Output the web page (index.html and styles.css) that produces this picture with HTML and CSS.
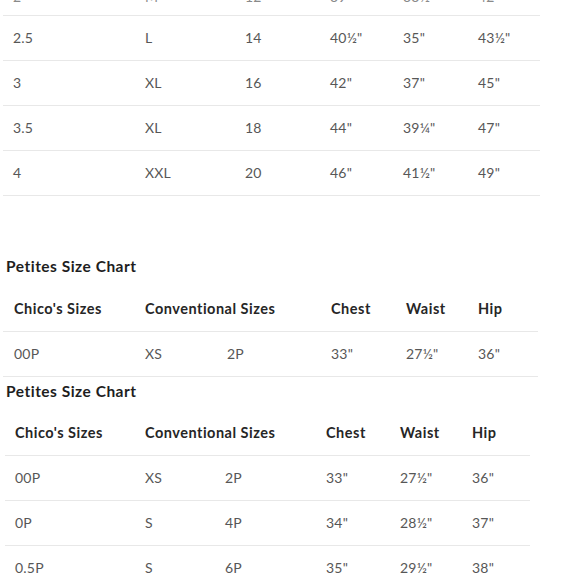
FILE: index.html
```html
<!DOCTYPE html>
<html>
<head>
<meta charset="utf-8">
<link rel="stylesheet" href="styles.css">
</head>
<body>
<div class="page">
  <div class="table t1">
    <div class="row partial"><span>2</span><span>M</span><span>12</span><span>39"</span><span>33½"</span><span>42"</span></div>
    <div class="row"><span>2.5</span><span>L</span><span>14</span><span>40½"</span><span>35"</span><span>43½"</span></div>
    <div class="row"><span>3</span><span>XL</span><span>16</span><span>42"</span><span>37"</span><span>45"</span></div>
    <div class="row"><span>3.5</span><span>XL</span><span>18</span><span>44"</span><span>39¼"</span><span>47"</span></div>
    <div class="row"><span>4</span><span>XXL</span><span>20</span><span>46"</span><span>41½"</span><span>49"</span></div>
  </div>

  <h2 class="title first">Petites Size Chart</h2>
  <div class="table t2">
    <div class="row head"><span>Chico's Sizes</span><span class="span2">Conventional Sizes</span><span>Chest</span><span>Waist</span><span>Hip</span></div>
    <div class="row"><span>00P</span><span>XS</span><span>2P</span><span>33"</span><span>27½"</span><span>36"</span></div>
  </div>

  <h2 class="title second">Petites Size Chart</h2>
  <div class="table t3">
    <div class="row head"><span>Chico's Sizes</span><span class="span2">Conventional Sizes</span><span>Chest</span><span>Waist</span><span>Hip</span></div>
    <div class="row"><span>00P</span><span>XS</span><span>2P</span><span>33"</span><span>27½"</span><span>36"</span></div>
    <div class="row"><span>0P</span><span>S</span><span>4P</span><span>34"</span><span>28½"</span><span>37"</span></div>
    <div class="row"><span>0.5P</span><span>S</span><span>6P</span><span>35"</span><span>29½"</span><span>38"</span></div>
  </div>
</div>
</body>
</html>
```

FILE: styles.css
```css
html, body {
  margin: 0;
  padding: 0;
  background: #ffffff;
}

body {
  width: 580px;
  height: 580px;
  overflow: hidden;
  font-family: Lato, "Open Sans", "Liberation Sans", sans-serif;
  font-size: 14px;
  color: #575757;
}

.page {
  display: flex;
  flex-direction: column;
}

.table {
  display: flex;
  flex-direction: column;
}

.row {
  display: grid;
  height: 44px;
  align-items: center;
  border-bottom: 1px solid #e8e8e8;
  line-height: 20px;
  white-space: nowrap;
  letter-spacing: 0.2px;
}

.row.partial {
  align-items: end;
  height: 45px;
  padding-bottom: 8px;
  box-sizing: border-box;
  color: #8a8a8a;
}

.t1 {
  margin-top: -29px;
  margin-left: 3px;
  width: 537px;
}

.t1 .row {
  grid-template-columns: 132px 100px 85px 73px 75px 1fr;
  padding-left: 10px;
}

.t2 {
  margin-left: 3px;
  width: 535px;
}

.t2 .row {
  grid-template-columns: 131px 82px 104px 75px 72px 1fr;
  padding-left: 11px;
}

.t3 {
  margin-left: 5px;
  width: 525px;
}

.t3 .row {
  grid-template-columns: 130px 80px 101px 74px 72px 1fr;
  padding-left: 10px;
}

.row.head {
  font-weight: 700;
  font-size: 14.5px;
  letter-spacing: 0.5px;
  color: #262626;
}

.span2 {
  grid-column: span 2;
}

.title {
  margin: 0;
  font-size: 15.5px;
  letter-spacing: 0.5px;
  line-height: 20px;
  font-weight: 700;
  color: #1e1e1e;
  padding-left: 6px;
}

.title.first {
  margin-top: 60px;
  margin-bottom: 11px;
}

.title.second {
  margin-top: 4px;
  margin-bottom: 10px;
}
```
